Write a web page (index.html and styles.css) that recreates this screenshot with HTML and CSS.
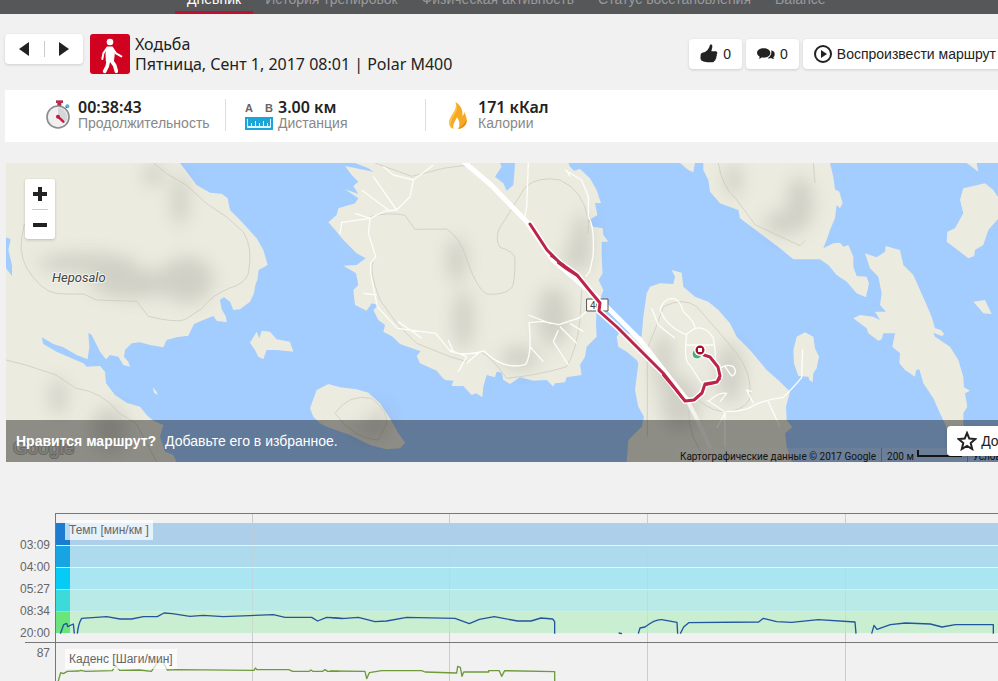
FILE: index.html
```html
<!DOCTYPE html>
<html lang="ru">
<head>
    <meta charset="UTF-8">
    <meta name="viewport" content="width=device-width, initial-scale=1.0">
    <title>Ходьба</title>
    <link rel="stylesheet" href="styles.css">
</head>
<body>
    <nav class="menu">
        <a href="#" class="activo">Дневник</a>
        <a href="#">История тренировок</a>
        <a href="#">Физическая активность</a>
        <a href="#">Статус восстановления</a>
        <a href="#">Balance</a>
    </nav>

    <header class="header">
        <div class="pager">
            <button aria-label="Назад"><svg width="12" height="16"><path d="M11 1v14L1 8z"/></svg></button>
            <button aria-label="Вперёд"><svg width="12" height="16"><path d="M1 1v14l10-7z"/></svg></button>
        </div>
        <div class="sport">
            <svg width="40" height="40" viewBox="0 0 120 120" fill="none" stroke="#fff" stroke-linecap="round" stroke-linejoin="round">
                <circle cx="60" cy="24" r="10" fill="#fff" stroke="none"/>
                <path d="M52 40h15l5 20-3 22H50l-1-22z" fill="#fff" stroke-width="5"/>
                <path d="M51 42L40 58l-3 17M68 44l10 14 16 9" stroke-width="6"/>
                <path d="M55 80l-3 16-8 16M64 80l10 14 5 18" stroke-width="11"/>
            </svg>
        </div>
        <div class="title">
            <h1>Ходьба</h1>
            <p>Пятница, Сент 1, 2017 08:01 | Polar M400</p>
        </div>
        <div class="actions">
            <button class="btn">
                <svg width="18" height="20" viewBox="0 0 54 60"><path d="M2 32q0-5 5-6l8-2q9-5 13-15 1-8 5-8 5 0 4 8l-3 13h14q5 1 4 6l-2 3q2 4-1 7 1 4-2 7 0 4-4 6-1 4-6 4H22Q8 54 3 49 0 44 2 32z"/></svg>
                0
            </button>
            <button class="btn comments">
                <svg width="18" height="12" viewBox="0 0 54 36"><path d="M20 1c11 0 20 6 20 14s-9 14-20 14l-4-1q-5 4-11 4 3-3 3-6Q0 22 0 15C0 7 9 1 20 1z"/><path d="M43 7q11 3 10 13 0 5-4 8 0 3 3 5-6 0-10-3-5 2-10 1 13-8 11-24z"/></svg>
                0
            </button>
            <button class="btn play">
                <svg width="18" height="18" viewBox="0 0 18 18"><circle cx="9" cy="9" r="8" fill="none" stroke="#222" stroke-width="2"/><path d="M7 5v8l6-4z"/></svg>
                Воспроизвести маршрут
            </button>
        </div>
    </header>

    <section class="stats">
        <div class="stat">
            <svg width="28" height="32" viewBox="0 0 84 96">
                <path d="M37 11h12v12H37z" fill="#a8304c"/><path d="M33 4h21v8H33z" fill="#b8304e"/>
                <circle cx="67" cy="22" r="6" fill="#4eb6d0"/><path d="M60 30l5-6" stroke="#555" stroke-width="3"/>
                <circle cx="39" cy="54" r="33" fill="#f0f0f0" stroke="#8c8c8c" stroke-width="5"/>
                <path d="M39 54V27a27 27 0 0 1 19 46z" fill="#d4d6d8"/>
                <path d="M38 52l17 16" stroke="#c8183e" stroke-width="7" stroke-linecap="round"/><circle cx="39" cy="53" r="6" fill="#c8183e"/>
            </svg>
            <div>
                <strong>00:38:43</strong>
                <span>Продолжительность</span>
            </div>
        </div>
        <div class="stat">
            <svg width="28" height="32" viewBox="0 0 28 32">
                <text x="0" y="13" class="ab">A</text><text x="20" y="13" class="ab">B</text>
                <path d="M0 18h28v13H0z" fill="#1ba5d8"/>
                <path d="M2.500 20v8.500h23V20M6.500 24v4M10.500 22v6M14.500 24v4M18.500 22v6M22.500 24v4" fill="none" stroke="#dff5ff"/>
                <path d="M3 27h22v2H3z" fill="#dff5ff"/>
            </svg>
            <div>
                <strong>3.00 км</strong>
                <span>Дистанция</span>
            </div>
        </div>
        <div class="stat">
            <svg width="28" height="32" viewBox="0 0 84 96">
                <path d="M32 9c4 17 0 23-7 33C17 54 11 64 13 76c1 7 6 12 13 14-4-13 3-20 10-35 6 10 7 12 7 21 0 6-2 11-4 14 15-2 26-12 26-25 0-9-3-17-7-26-1 6-2 9-6 12C55 31 45 18 32 9z" fill="#f7a922"/>
                <path d="M32 9c6 16 5 23-2 35-8 14-16 24-11 42C7 75 14 57 24 43c7-11 10-17 8-34z" fill="#fbc34e"/>
                <path d="M65 61c2 16-10 27-26 29 11-7 20-16 26-29z" fill="#ea8a18"/>
            </svg>
            <div>
                <strong>171 кКал</strong>
                <span>Калории</span>
            </div>
        </div>
    </section>

    <section class="map">
        <svg class="terrain" width="100%" height="299">
            <defs>
                <filter id="blur" x="-100%" y="-100%" width="300%" height="300%"><feGaussianBlur stdDeviation="26"/></filter>
            </defs>
            <!-- west -->
            <g transform="translate(-6 -13) scale(.33333)">
                <path class="land" d="M18 39H540L560 65 590 105 630 128 665 131 683 145 690 180 720 210 770 265 790 300 803 345 776 360 772 390 766 405 762 430 750 455 720 478 700 480 690 455 672 442 660 450 665 478 678 500 680 517 650 512 640 498 610 510 582 522 565 557 530 562 500 570 490 592 450 585 420 577 395 580 375 600 372 620 385 635 390 650 370 645 355 620 330 615 318 628 300 605 290 585 275 555 265 548 268 590 263 628 230 615 190 592 160 582 125 562 130 582 170 605 220 627 250 640 260 650 300 648 315 665 318 700 345 735 380 758 420 770 440 795 460 812 490 825 480 860 495 905 520 915 530 936H18z"/>
                <path class="sea" d="M18 262l14 6-7 32 11 45v33l-18-23z"/>
                <path class="land" d="M750 578l20-33 8 20 7-23 25 3 20 23 40 7 10 30-20-2-30-3-30 0-10 28-15-8-10-20zM458 712l12 13 3 10-11-7z"/>
                <g class="shade">
                    <ellipse cx="260" cy="340" rx="150" ry="30"/>
                    <ellipse cx="540" cy="150" rx="25" ry="80"/>
                    <ellipse cx="460" cy="75" rx="28" ry="35"/>
                    <ellipse cx="560" cy="390" rx="80" ry="70"/>
                    <ellipse cx="400" cy="400" rx="130" ry="45"/>
                    <ellipse cx="175" cy="740" rx="25" ry="55"/>
                    <ellipse cx="330" cy="840" rx="55" ry="70"/>
                </g>
                <path class="trail" d="M460 39l40 32 60 35 60 55 60 40 50 45q30 45 15 125-10 30-60 45-50 20-80 60l-50 33q-30 10-110-10l-35-45-120-4-40-18-50 0q-60 5-100-50-45-50-35-120l8-40M18 630l60 15 90 30 60 40q80 10 130 75l50 30 70 130"/>
            </g>
            <!-- middle -->
            <g transform="translate(314 -13) scale(.33333)">
                <path class="land" d="M75 48L160 65 145 55 105 39H540L545 50 525 80 550 100 560 122 580 105 583 70 585 39H745L750 50 762 62 780 57 810 85 830 120 843 160 825 158 832 195 805 212 820 230 848 235 850 255 865 275 845 275 845 320 848 370 836 390 850 420 840 450 830 480 828 520 830 560 800 590 795 620 780 645 785 675 740 682 735 697 705 700 700 710 680 690 640 692 600 682 570 702 550 690 545 668 530 665 525 682 500 675 490 710 487 742 468 730 455 735 430 708 395 708 400 692 375 690 365 680 350 662 300 640 290 618 302 604 240 582 218 560 190 545 195 525 175 510 160 480 175 465 155 460 140 482 105 465 100 420 115 405 108 370 70 347 110 345 137 325 110 310 70 270 50 245 25 217 50 195 55 175 105 160 115 145 75 118 115 132 100 108 115 95 95 75z"/>
                <path class="land" d="M-30 775l20-55 35-18 35 10 50 6 35 10 35 32 30 45 25 45 21 28-16 17-40 3-50-13-60-30-70-25-20-10-20-20z"/>
                <g class="shade">
                    <ellipse cx="785" cy="280" rx="30" ry="90"/>
                    <ellipse cx="765" cy="320" rx="35" ry="40"/>
                    <ellipse cx="780" cy="290" rx="20" ry="50"/>
                    <ellipse cx="410" cy="330" rx="30" ry="70"/>
                    <ellipse cx="430" cy="510" rx="30" ry="90"/>
                    <ellipse cx="600" cy="625" rx="60" ry="35"/>
                    <ellipse cx="700" cy="500" rx="50" ry="90"/>
                    <ellipse cx="180" cy="815" rx="25" ry="50"/>
                    <ellipse cx="140" cy="840" rx="50" ry="18"/>
                </g>
                <path class="trail" d="M150 200q60-15 105-4l30 42 95-1q40 25 60 90 30 90 60 105 50 5 75-18 10-15 10-90-5-20-45-32-15-20-3-55l38-60 40-65q40-35 105-22 70 30 85 120v40M165 39l110 40 100-25 80-10M160 330q-15 30 20 120l50 70 60 60 100 40 50 15M480 605q30 10 80 80 100-10 180-35 30-50 40-140l5-90M45 790q40-60 110-45 50 40 45 75l-25 50q-70 0-130-80z"/>
                <path class="road" d="M340 45l-60 45-10 50-40 40-35 3-45 22-5 45 22 70-15 20v30l20 100 60 65 115 15 45 55q50 15 100-2 60 60 125 40 20-30 10-125l40-4 50 10 60-20 45-40M230 180L160 80M205 180l-80-60M150 205l-85 12-5 35M105 190l45 15M280 90l-60-15-30-25M130 430l40 5M235 515l70 50M390 600l50 20-25 45M440 640l40-35M385 570l15 35M630 590l40 45M715 540l-15 35 45 70M720 530l50 50M690 520l-65-25M750 520l40 25M625 39l-5 130-5 30M735 60l50 30 20 50v60q20 30 14 120l-10 45-12 15M740 60l10 20"/>
            </g>
            <!-- east -->
            <g transform="translate(634 -13) scale(.33333)">
                <path class="land" d="M95 360L125 368 130 410 165 440 205 455 235 480 270 520 290 560 330 600 380 660 420 695 450 725 438 770 440 810 457 832 435 850 440 890 455 936H-40L-35 870 5 830 12 800-5 770-15 720-10 680-5 640-10 630-40 605-65 590-70 560-60 545 5 560 10 500 20 430 30 410 60 400 100 402 105 380z"/>
                <path class="land" d="M460 600l10-40 25-13 25 13 5 35 12 25-7 35-10 15-2 27-10-7-3-10-30-2-13-38z"/>
                <path class="land" d="M120 39h45l-5 28-15-7zM190 39H570L580 80 585 118 598 125 608 160 600 175 590 165 585 205 570 240 560 270 550 295 580 280 600 278 610 290 625 285 640 320 640 350 650 378 680 380 687 400 678 442 650 430 620 395 590 375 565 345 540 328 460 328 420 295 380 265 340 235 300 205 295 180 240 160 210 125 205 90 190 60z"/>
                <path class="land" d="M675 310L710 322 735 305 737 288 760 295 780 300 790 345 820 375 840 420 860 465 875 500 885 535 903 540 913 553 905 558 880 548 885 560 930 590 955 630 970 680 972 712 990 722 975 730 982 770 970 790 970 828 960 860H925L918 828 900 790 880 745 850 700 838 658 828 660 825 680 795 660 778 640 780 610 757 590 765 550 730 550 725 568 715 572 685 550 680 535 640 505 660 495 700 500 720 510 705 485 738 485 720 465 725 430 715 380 690 355z"/>
                <path class="land" d="M970 115L1035 100 1060 120 1080 150V200L1045 240 1030 285 1005 300 1003 318 985 325 960 305 920 275 922 245 945 235 970 190 960 150zM1000 455l35-5 20 42-25-2zM980 39h30l5 26z"/>
                <g class="shade">
                    <ellipse cx="430" cy="220" rx="60" ry="35"/>
                    <ellipse cx="480" cy="160" rx="40" ry="80"/>
                    <ellipse cx="270" cy="670" rx="40" ry="90"/>
                    <ellipse cx="120" cy="760" rx="60" ry="80"/>
                    <ellipse cx="70" cy="640" rx="30" ry="90"/>
                    <ellipse cx="280" cy="90" rx="25" ry="50"/>
                </g>
                <path class="trail" d="M235 39q10 70 55 110l55 75 135 63 15-15M520 39l5 60M20 600q30-70 50-130 60-30 100 0l70 80 50 60q45 60 40 120 5 40-60 55-50 5-95-35M22 600v260M145 780q0 90 60 150"/>
                <path class="road" d="M60 480q10-35 40-35 20 5 30 40 35 30 35 50M60 480q20 50 80 75M35 475l20 50 50 40M135 555l30-20q35-8 55 30 10 50 5 90M140 555q-10 80 10 90l35 55M135 585h85M240 655q20-15 40-5 15 20-5 28l-20-28M200 750q50 30 55 40l-25 45M205 755q30-30 55-25l-20 25M255 785q60 0 85-18 40-20 90-25 40-40 55-60l3-85M340 760l-20-40 15 5M385 755l35 75M255 790v100"/>
            </g>
            <!-- road 46 and the walked route -->
            <g fill="none" stroke-linecap="round" stroke-linejoin="round">
                <path d="M457-2L485 22 521 59 547 97 594 137 634 177 681 237" stroke="#fff" stroke-width="5"/>
                <path d="M681 237L690 254 704 284" stroke="#f3f2ec" stroke-width="4"/>
                <path d="M581 136h21v12h-21z" fill="#fff" stroke="#555"/>
                <text x="584" y="146" class="shield">46</text>
                <path d="M524 61L541 87 554 100 571 112 584 128 594 140 593 148 611 164 657 210 679 238 688 237 696 230 699 221 711 219 714 213 712 204 704 194 698 192" stroke="#fff" stroke-width="6"/>
                <path d="M524 61L541 87 554 100 571 112 584 128 594 140 593 148 611 164 657 210 679 238 688 237 696 230 699 221 711 219 714 213 712 204 704 194 698 192" stroke="#bb2549" stroke-width="3"/>
                <path d="M552 100L560 106 571 113M545 93L558 102M657 212L668 225 676 235M700 222L709 220 714 216" stroke="#bb2549" stroke-width="2"/>
                <circle cx="691" cy="191" r="5" fill="#48ae80" stroke="#fff"/>
                <circle cx="694" cy="187" r="6" fill="#fff"/>
                <path d="M694 182.500a4.500 4.500 0 1 1 0 9 4.500 4.500 0 1 1 0-9zM692 185v4h4v-4z" fill="#a80f2f" fill-rule="evenodd"/>
            </g>
            <text x="46" y="119" class="place">Heposalo</text>
            <text x="7" y="291" class="logo">Google</text>
        </svg>
        <div class="zoom">
            <button aria-label="Приблизить"><svg width="14" height="14"><path d="M5 0h4v5h5v4H9v5H5V9H0V5h5z"/></svg></button>
            <button aria-label="Отдалить"><svg width="14" height="4"><path d="M0 0h14v4H0z"/></svg></button>
        </div>
        <div class="credits">
            <span>Картографические данные © 2017 Google</span>
            <span class="scale">200 м <i></i></span>
            <a href="#">Условия</a>
        </div>
        <div class="favorite">
            <strong>Нравится маршрут?</strong>
            <span>Добавьте его в избранное.</span>
            <button class="btn">
                <svg width="20" height="20" viewBox="0 0 20 20"><path d="M10 2l2.300 5.600 6 .5-4.600 3.900 1.500 6L10 14.800 4.800 18l1.500-6L1.700 8.100l6-.5z" fill="none" stroke="#222" stroke-width="2"/></svg>
                Добавить в избранное
            </button>
        </div>
    </section>

    <section class="chart pace">
        <div class="axis">
            <span>03:09</span><span>04:00</span><span>05:27</span><span>08:34</span><span>20:00</span>
        </div>
        <div class="plot">
            <svg width="100%" height="128">
                <path class="grid" d="M196.500 0v128M393.500 0v128M591.500 0v128M789.500 0v128"/>
                <g class="bands">
                    <rect y="9" width="100%" height="22" fill="#adcfea"/>
                    <rect y="31" width="100%" height="22" fill="#addbed"/>
                    <rect y="53" width="100%" height="22" fill="#a9e6f1"/>
                    <rect y="75" width="100%" height="22" fill="#b9eae8"/>
                    <rect y="97" width="100%" height="22" fill="#c9eed2"/>
                </g>
                <path class="grid faint" d="M196.500 9v110M393.500 9v110M591.500 9v110M789.500 9v110"/>
                <rect y="9" width="14" height="22" fill="#1c7cd0"/>
                <rect y="31" width="14" height="22" fill="#16a4e2"/>
                <rect y="53" width="14" height="22" fill="#06cbf6"/>
                <rect y="75" width="14" height="22" fill="#3cdad8"/>
                <rect y="97" width="14" height="22" fill="#6ae57e"/>
                <g fill="#e2f5fa">
                    <rect y="31" width="100%" height="1"/>
                    <rect y="53" width="100%" height="1"/>
                    <rect y="75" width="100%" height="1" opacity=".6"/>
                    <rect y="97" width="100%" height="1" opacity=".3"/>
                </g>
                <g class="pace-line">
                    <path transform="translate(-56 -24) scale(.33333)" d="M181 431l10-27 9-4 3 10 17-8 3 29M232 431q3-30 13-46l75-5 40 7h35l35-7h42l20-11 25 2 53 8 40-3 60 4 150-6 35 8h80l18 11 27-11 50 3"/>
                    <path transform="translate(274 -24) scale(.33333)" d="M0 382l35 4 50-4 50 13 35-2 60-11 145 3 43 16 30-13 45-8 70 13h40l30-9 35 3 6 8v36M866 429l10 2"/>
                    <path transform="translate(564 -24) scale(.33333)" d="M55 431l5-17 15-3q30-23 50-22l46 8 2 34M181 431l10-20 15-13 210-2 14-11 40 10 45 2 80-8 110 7 3 35M755 431l7-25 9 12 40-14 45-5 75 3 35 9 40-7h114v27"/>
                </g>
            </svg>
            <span class="chart-title">Темп [мин/км ]</span>
        </div>
    </section>

    <section class="chart cadence">
        <div class="axis"><span>87</span></div>
        <div class="plot">
            <svg width="100%" height="38">
                <path class="grid" d="M196.500 0v38M393.500 0v38M591.500 0v38M789.500 0v38"/>
                <g class="cadence-line">
                    <path transform="translate(-56 -153) scale(.33333)" d="M170 590l12-42 8 3 12-7 35-1 5-2 15 3 80-2 10-15 12 14 60-1 35 4 20-28 15 0 13 24 30-1 230 2 4-7 5 5 95 0 12 5h50l5-4 5 4 30 0 7-5 8 5 35 0"/>
                    <path transform="translate(274 -153) scale(.33333)" d="M0 543l105 1 5 22 8-18 37-6h120l10 4 95 3 3-20 8 3 5 27 5-13 75 0v-4h32l7 17 9-17 150 3v45"/>
                </g>
            </svg>
            <span class="chart-title">Каденс [Шаги/мин]</span>
        </div>
    </section>
</body>
</html>
```

FILE: styles.css
```css
* {
    box-sizing: border-box;
}
body {
    font-family: "Liberation Sans", Arial, sans-serif;
    font-size: 14px;
    background: #f1f1f1;
    color: #222;
    margin: 0;
    overflow: hidden;
}
button {
    font: inherit;
    color: inherit;
    background: white;
    border: none;
    padding: 0;
    cursor: pointer;
}
button svg {
    fill: #222;
}
.menu {
    display: flex;
    align-items: flex-end;
    height: 14px;
    padding-left: 175px;
    background: #565759;
    overflow: hidden;
}
.menu a {
    padding: 0 12px 4px;
    line-height: 16px;
    border-bottom: 3px solid transparent;
    color: #999a9c;
    text-decoration: none;
    white-space: nowrap;
}
.menu .activo {
    color: white;
    border-color: #c0102f;
}
.header {
    display: flex;
    align-items: flex-start;
    height: 76px;
    padding: 20px 0 0 5px;
}
.pager {
    display: flex;
    width: 78px;
    height: 30px;
    padding: 7px 0;
    background: white;
    border-radius: 4px;
    box-shadow: 0 1px 3px rgba(0, 0, 0, 0.15);
}
.pager button {
    flex: 1;
    display: flex;
    align-items: center;
    justify-content: center;
}
.pager button + button {
    border-left: 1px solid #ccc;
}
.sport {
    width: 40px;
    height: 40px;
    margin: 0 5px 0 7px;
    background: #d0021f;
    border-radius: 3px;
}
.title {
    flex: 1;
    font-family: "Noto Sans", sans-serif;
    font-size: 16px;
    line-height: 20px;
    white-space: nowrap;
}
.title h1, .title p {
    margin: 0;
    font-size: 16px;
    font-weight: normal;
}
.actions {
    display: flex;
    gap: 4px;
    padding-top: 5px;
    margin-right: -9px;
}
.btn {
    display: flex;
    flex: none;
    align-items: center;
    gap: 5px;
    height: 30px;
    padding: 0 11px;
    border-radius: 4px;
    box-shadow: 0 1px 3px rgba(0, 0, 0, 0.15);
    white-space: nowrap;
}
.stats {
    display: flex;
    height: 52px;
    margin-left: 5px;
    padding: 9px 20px;
    background: white;
}
.stat {
    display: flex;
    gap: 5px;
    width: 200px;
    height: 32px;
    padding-left: 20px;
}
.stat + .stat {
    padding-left: 19px;
    border-left: 1px solid #ddd;
}
.stat strong {
    display: block;
    font-family: "Noto Sans", sans-serif;
    font-size: 16px;
    font-weight: 600;
    line-height: 16px;
}
.stat span {
    display: block;
    line-height: 16px;
    color: #888;
}
.ab {
    font-size: 11px;
    font-weight: bold;
    fill: #666;
}
.map {
    position: relative;
    height: 299px;
    margin: 21px 0 51px 6px;
    background: #a3ccff;
    overflow: hidden;
}
.terrain {
    display: block;
}
.land {
    fill: #ecebe0;
}
.sea {
    fill: #a3ccff;
}
.shade {
    fill: #66665e;
    opacity: 0.2;
    filter: url(#blur);
}
.trail {
    fill: none;
    stroke: #c6c5b8;
    stroke-width: 2;
}
.road {
    fill: none;
    stroke: #fdfdfa;
    stroke-width: 4;
    stroke-linejoin: round;
}
.place {
    font: italic 13px Roboto, sans-serif;
    fill: #444;
    stroke: #f5f5ee;
    stroke-width: 2px;
    paint-order: stroke;
}
.shield {
    font: 10px Roboto, sans-serif;
    fill: #444;
}
.logo {
    font-size: 19px;
    fill: #d8d8d0;
    stroke: #aeaea6;
    stroke-width: 2px;
    paint-order: stroke;
}
.zoom {
    position: absolute;
    top: 16px;
    left: 19px;
    width: 30px;
    padding: 0 7px;
    background: white;
    border-radius: 3px;
    box-shadow: 0 1px 3px rgba(0, 0, 0, 0.2);
}
.zoom button {
    display: flex;
    align-items: center;
    justify-content: center;
    width: 16px;
    height: 30px;
}
.zoom button + button {
    border-top: 1px solid #ccc;
}
.credits {
    position: absolute;
    right: 0;
    bottom: 0;
    left: 668px;
    display: flex;
    height: 14px;
    background: rgba(245, 245, 245, 0.2);
    font: 10px/14px Roboto, sans-serif;
    color: #222;
    white-space: nowrap;
    overflow: hidden;
}
.credits > * {
    flex: none;
    padding: 2px 5px 0 6px;
}
.credits > * + * {
    padding-left: 5px;
    border-left: 1px solid #999;
}
.credits a {
    color: inherit;
    text-decoration: none;
}
.scale {
    display: flex;
    gap: 3px;
}
.scale i {
    width: 45px;
    height: 7px;
    border: 2px solid #222;
    border-top: none;
}
.favorite {
    position: absolute;
    right: 0;
    bottom: 0;
    left: 0;
    display: flex;
    align-items: center;
    gap: 9px;
    height: 42px;
    padding-left: 10px;
    background: rgba(0, 0, 0, 0.4);
    color: white;
}
.favorite .btn {
    gap: 4px;
    margin-left: auto;
    margin-right: -139px;
    padding: 0 10px;
    color: #222;
}
.chart {
    display: flex;
    height: 129px;
    font-size: 12px;
    color: #666;
}
.axis {
    width: 55px;
    padding-right: 5px;
    text-align: right;
}
.axis span {
    display: block;
    line-height: 22px;
}
.pace .axis {
    padding-top: 21px;
}
.plot {
    position: relative;
    flex: 1;
    border-top: 1px solid #77777b;
    border-left: 1px solid #77777b;
}
.plot svg {
    display: block;
}
.chart-title {
    position: absolute;
    top: 6px;
    left: 9px;
    padding: 0 4px;
    line-height: 20px;
    background: rgba(255, 255, 255, 0.7);
}
.cadence {
    height: 39px;
}
.cadence .axis {
    width: 30px;
    margin-left: 25px;
    border-top: 1px solid #77777b;
}
.cadence .axis span {
    line-height: 20px;
}
.grid {
    stroke: #ccc;
}
.faint {
    opacity: 0.5;
}
.pace-line, .cadence-line {
    fill: none;
    stroke: #2255a0;
    stroke-width: 4;
    stroke-linejoin: round;
}
.cadence-line {
    stroke: #6f9a3c;
}
```
